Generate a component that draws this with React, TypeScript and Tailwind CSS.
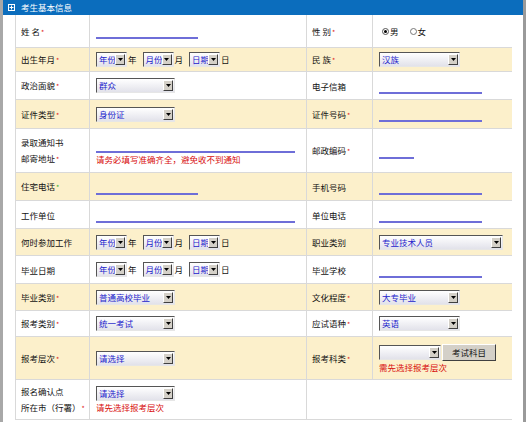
import React from "react";

const font = { fontFamily: '"Noto Sans CJK SC", "Noto Sans", sans-serif' };

function Star({ green }: { green?: boolean }) {
  return <span className={`text-[7px] ml-[1px] ${green ? "text-[#30b030]" : "text-[#e02020]"}`}>*</span>;
}

function Label({ text, star, green }: { text: React.ReactNode; star?: boolean; green?: boolean }) {
  return (
    <div className="flex items-center pl-[5px] text-[8.5px] text-[#111] border-r border-[#d9d9d9] leading-[16px]">
      <div>
        {text}
        {star && <Star green={green} />}
      </div>
    </div>
  );
}

function Cell({ children, last }: { children?: React.ReactNode; last?: boolean }) {
  return (
    <div className={`flex items-center pl-[6px] ${last ? "" : "border-r border-[#d9d9d9]"}`}>{children}</div>
  );
}

function Select({ w, text }: { w: number; text: string }) {
  return (
    <div
      className="flex items-center h-[15px] border border-t-[#555] border-l-[#555] border-b-[#e6e6e6] border-r-[#e6e6e6] bg-gradient-to-b from-white to-[#e2e2ea]"
      style={{ width: w }}
    >
      <span className="flex-1 pl-[2px] text-[8.5px] leading-[13px] text-[#2323cc] whitespace-nowrap overflow-hidden">{text}</span>
      <span className="w-[10px] h-[11px] mr-[1px] bg-[#d4d0c8] border border-t-white border-l-white border-b-[#404040] border-r-[#404040] flex items-center justify-center">
        <svg width="5" height="3" viewBox="0 0 5 3">
          <path d="M0 0h5L2.5 3z" fill="#000" />
        </svg>
      </span>
    </div>
  );
}

function Line({ w }: { w: number }) {
  return <div className="h-[16px] border-b-2 border-[#6e6ed8]" style={{ width: w }} />;
}

function DateSel() {
  return (
    <div className="flex items-center gap-[6px] text-[8.5px] text-[#111]">
      <div className="flex items-center gap-[1px]">
        <Select w={31} text="年份" />
        <span>年</span>
      </div>
      <div className="flex items-center gap-[1px]">
        <Select w={31} text="月份" />
        <span>月</span>
      </div>
      <div className="flex items-center gap-[1px]">
        <Select w={31} text="日期" />
        <span>日</span>
      </div>
    </div>
  );
}

function Row({ h, cream, children }: { h: number; cream?: boolean; children: React.ReactNode }) {
  return (
    <div
      className={`grid grid-cols-[74px_217px_66px_139px] border-b border-[#d9d9d9] ${cream ? "bg-[#fcf0cb]" : "bg-white"}`}
      style={{ height: h }}
    >
      {children}
    </div>
  );
}

function Red({ children }: { children: React.ReactNode }) {
  return <div className="text-[8.5px] text-[#d80c0c] leading-[12px]">{children}</div>;
}

export default function App() {
  return (
    <div className="w-[528px] h-[422px] bg-white overflow-hidden" style={font}>
      <div className="w-[526px] h-[422px] border-l-[3px] border-r-[3px] border-[#a8a8a8] border-r-[#9a9a9a]">
        <div className="h-[15px] bg-[#0b6dbd] flex items-center pl-[5px] gap-[6px]">
          <svg width="7" height="7" viewBox="0 0 7 7">
            <rect x="0.5" y="0.5" width="6" height="6" fill="none" stroke="#fff" strokeWidth="1" />
            <path d="M3.5 1.5v4M1.5 3.5h4" stroke="#fff" strokeWidth="1" />
          </svg>
          <span className="text-[8.5px] text-white leading-[15px]">考生基本信息</span>
        </div>
        <div className="pl-[12px]">
          <div className="w-[497px] border-l border-[#d9d9d9]">
            <Row h={33}>
              <Label text="姓 名" star />
              <Cell><Line w={102} /></Cell>
              <Label text="性 别" star />
              <Cell last>
                <div className="flex items-center text-[8.5px] text-[#111] pl-[3px]">
                  <span className="w-[7px] h-[7px] rounded-full border border-[#555] bg-white flex items-center justify-center">
                    <span className="w-[3px] h-[3px] rounded-full bg-black" />
                  </span>
                  <span className="ml-[1px]">男</span>
                  <span className="ml-[11px] w-[7px] h-[7px] rounded-full border border-[#777] bg-white" />
                  <span className="ml-[1px]">女</span>
                </div>
              </Cell>
            </Row>
            <Row h={24} cream>
              <Label text="出生年月" star />
              <Cell><DateSel /></Cell>
              <Label text="民 族" star />
              <Cell last><Select w={81} text="汉族" /></Cell>
            </Row>
            <Row h={28}>
              <Label text="政治面貌" star />
              <Cell><Select w={79} text="群众" /></Cell>
              <Label text="电子信箱" />
              <Cell last><Line w={103} /></Cell>
            </Row>
            <Row h={29} cream>
              <Label text="证件类型" star />
              <Cell><Select w={79} text="身份证" /></Cell>
              <Label text="证件号码" star />
              <Cell last><Line w={103} /></Cell>
            </Row>
            <Row h={44}>
              <Label text={<>录取通知书<br />邮寄地址</>} star />
              <Cell>
                <div className="flex flex-col">
                  <Line w={199} />
                  <Red>请务必填写准确齐全，避免收不到通知</Red>
                </div>
              </Cell>
              <Label text="邮政编码" star />
              <Cell last><Line w={35} /></Cell>
            </Row>
            <Row h={28} cream>
              <Label text="住宅电话" star green />
              <Cell><Line w={102} /></Cell>
              <Label text="手机号码" />
              <Cell last><Line w={103} /></Cell>
            </Row>
            <Row h={28}>
              <Label text="工作单位" />
              <Cell><Line w={199} /></Cell>
              <Label text="单位电话" />
              <Cell last><Line w={103} /></Cell>
            </Row>
            <Row h={27} cream>
              <Label text="何时参加工作" />
              <Cell><DateSel /></Cell>
              <Label text="职业类别" />
              <Cell last><Select w={124} text="专业技术人员" /></Cell>
            </Row>
            <Row h={28}>
              <Label text="毕业日期" />
              <Cell><DateSel /></Cell>
              <Label text="毕业学校" />
              <Cell last><Line w={103} /></Cell>
            </Row>
            <Row h={27} cream>
              <Label text="毕业类别" star />
              <Cell><Select w={79} text="普通高校毕业" /></Cell>
              <Label text="文化程度" star />
              <Cell last><Select w={81} text="大专毕业" /></Cell>
            </Row>
            <Row h={26}>
              <Label text="报考类别" star />
              <Cell><Select w={79} text="统一考试" /></Cell>
              <Label text="应试语种" star />
              <Cell last><Select w={81} text="英语" /></Cell>
            </Row>
            <Row h={43} cream>
              <Label text="报考层次" star />
              <Cell><Select w={79} text="请选择" /></Cell>
              <Label text="报考科类" star />
              <Cell last>
                <div className="flex flex-col">
                  <div className="flex items-center gap-[1px]">
                    <Select w={62} text="" />
                    <button className="w-[54px] h-[17px] bg-[#d4d0c8] border border-t-white border-l-white border-b-[#404040] border-r-[#404040] text-[8.5px] text-[#111] leading-[14px]">
                      考试科目
                    </button>
                  </div>
                  <Red>需先选择报考层次</Red>
                </div>
              </Cell>
            </Row>
            <div className="grid grid-cols-[74px_217px_205px] h-[40px] border-b border-[#d9d9d9] bg-white">
              <Label text={<>报名确认点<br />所在市（行署）</>} star />
              <Cell>
                <div className="flex flex-col">
                  <Select w={79} text="请选择" />
                  <Red>请先选择报考层次</Red>
                </div>
              </Cell>
              <div />
            </div>
          </div>
        </div>
      </div>
    </div>
  );
}
